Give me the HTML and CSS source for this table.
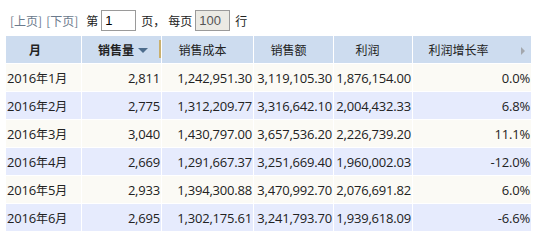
FILE: index.html
```html
<!DOCTYPE html>
<html lang="zh-CN">
<head>
  <meta charset="UTF-8">
  <title>月度销售报表</title>
  <link rel="stylesheet" href="styles.css">
</head>
<body>
  <div class="pager">
    <a href="#" class="pager-link">[上页]</a>
    <a href="#" class="pager-link next">[下页]</a>
    <span class="label">第</span>
    <input type="text" class="page-input" value="1">
    <span class="label after">页，</span>
    <span class="label per">每页</span>
    <input type="text" class="page-input size" value="100" disabled>
    <span class="label after">行</span>
  </div>

  <table class="grid">
    <thead>
      <tr>
        <th class="c-month">月</th>
        <th class="c-qty sorted">销售量<span class="sort-arrow"></span></th>
        <th class="c-cost">销售成本</th>
        <th class="c-amount">销售额</th>
        <th class="c-profit">利润</th>
        <th class="c-rate">利润增长率<span class="more-arrow"></span></th>
      </tr>
    </thead>
    <tbody>
      <tr>
        <td class="c-month">2016<i>年</i>1<i>月</i></td>
        <td>2,811</td><td>1,242,951.30</td><td>3,119,105.30</td><td>1,876,154.00</td><td>0.0%</td>
      </tr>
      <tr>
        <td class="c-month">2016<i>年</i>2<i>月</i></td>
        <td>2,775</td><td>1,312,209.77</td><td>3,316,642.10</td><td>2,004,432.33</td><td>6.8%</td>
      </tr>
      <tr>
        <td class="c-month">2016<i>年</i>3<i>月</i></td>
        <td>3,040</td><td>1,430,797.00</td><td>3,657,536.20</td><td>2,226,739.20</td><td>11.1%</td>
      </tr>
      <tr>
        <td class="c-month">2016<i>年</i>4<i>月</i></td>
        <td>2,669</td><td>1,291,667.37</td><td>3,251,669.40</td><td>1,960,002.03</td><td>-12.0%</td>
      </tr>
      <tr>
        <td class="c-month">2016<i>年</i>5<i>月</i></td>
        <td>2,933</td><td>1,394,300.88</td><td>3,470,992.70</td><td>2,076,691.82</td><td>6.0%</td>
      </tr>
      <tr>
        <td class="c-month">2016<i>年</i>6<i>月</i></td>
        <td>2,695</td><td>1,302,175.61</td><td>3,241,793.70</td><td>1,939,618.09</td><td>-6.6%</td>
      </tr>
    </tbody>
  </table>
</body>
</html>
```

FILE: styles.css
```css
* {
  margin: 0;
  padding: 0;
  box-sizing: border-box;
}

body {
  padding: 10px 5px 0;
  background: #fff;
  color: #222;
  font-family: "Noto Sans CJK SC", sans-serif;
  font-size: 12px;
}

.pager {
  display: flex;
  align-items: center;
  height: 20px;
  padding-left: 5px;
}

.pager-link {
  color: #6b7a8c;
  text-decoration: none;
}

.pager-link.next {
  margin-left: 4px;
}

.label {
  color: #222;
  margin-left: 8px;
  margin-right: 3px;
}

.label.after {
  margin-left: 5px;
  margin-right: 0;
}

.label.per {
  margin-left: 3px;
}

.page-input {
  width: 35px;
  height: 21px;
  padding: 0 3px;
  border: 1px solid #9a9a9a;
  background: #fff;
  color: #000;
  font-family: "Liberation Sans", Arial, sans-serif;
  font-size: 13px;
  outline: none;
}

.page-input.size {
  background: #ebeae4;
  color: #555;
}

.grid {
  margin-top: 5px;
  border-collapse: separate;
  border-spacing: 1px;
  background: #fff;
  table-layout: fixed;
  width: 527px;
}

.grid th,
.grid td {
  height: 27px;
  padding: 0 1px;
  line-height: 18px;
  vertical-align: middle;
  white-space: nowrap;
  overflow: visible;
}

.grid th {
  position: relative;
  background: #cddcef;
  color: #222;
  font-weight: normal;
  text-align: center;
  padding-right: 11px;
}

.grid th.c-month,
.grid th.sorted {
  font-weight: bold;
}

.grid th.c-month {
  width: 75px;
  padding-right: 18px;
}

.grid th.c-qty {
  width: 79px;
  padding-right: 0;
  text-align: left;
  padding-left: 16px;
}

.grid th.c-cost {
  width: 91px;
}

.grid th.c-amount {
  width: 79px;
}

.grid th.c-profit {
  width: 78px;
  padding-right: 12px;
}

.grid th.c-rate {
  width: 118px;
  padding-right: 28px;
}

.sort-arrow {
  display: inline-block;
  margin-left: 4px;
  vertical-align: 2px;
  border-left: 5px solid transparent;
  border-right: 5px solid transparent;
  border-top: 5px solid #4d6c8c;
}

.grid th.sorted::after {
  content: "";
  position: absolute;
  right: 0;
  top: 4px;
  width: 2px;
  height: 18px;
  background: #c9b06e;
}

.more-arrow {
  position: absolute;
  right: 6px;
  top: 11px;
  border-top: 4px solid transparent;
  border-bottom: 4px solid transparent;
  border-left: 4px solid #a3a7ad;
}

.grid td {
  text-align: right;
  color: #222;
  font-family: "Open Sans", "Noto Sans CJK SC", sans-serif;
  font-size: 13px;
  letter-spacing: -0.2px;
}

.grid td i {
  font-style: normal;
  font-family: "Noto Sans CJK SC", sans-serif;
  font-size: 12px;
  line-height: 1;
  letter-spacing: 0;
}

.grid tbody tr:nth-child(odd) td {
  background: #fbfaf5;
}

.grid tbody tr:nth-child(even) td {
  background: #e6ebfd;
}

.grid tbody td.c-month {
  background: #cddcef;
  text-align: left;
}
```
